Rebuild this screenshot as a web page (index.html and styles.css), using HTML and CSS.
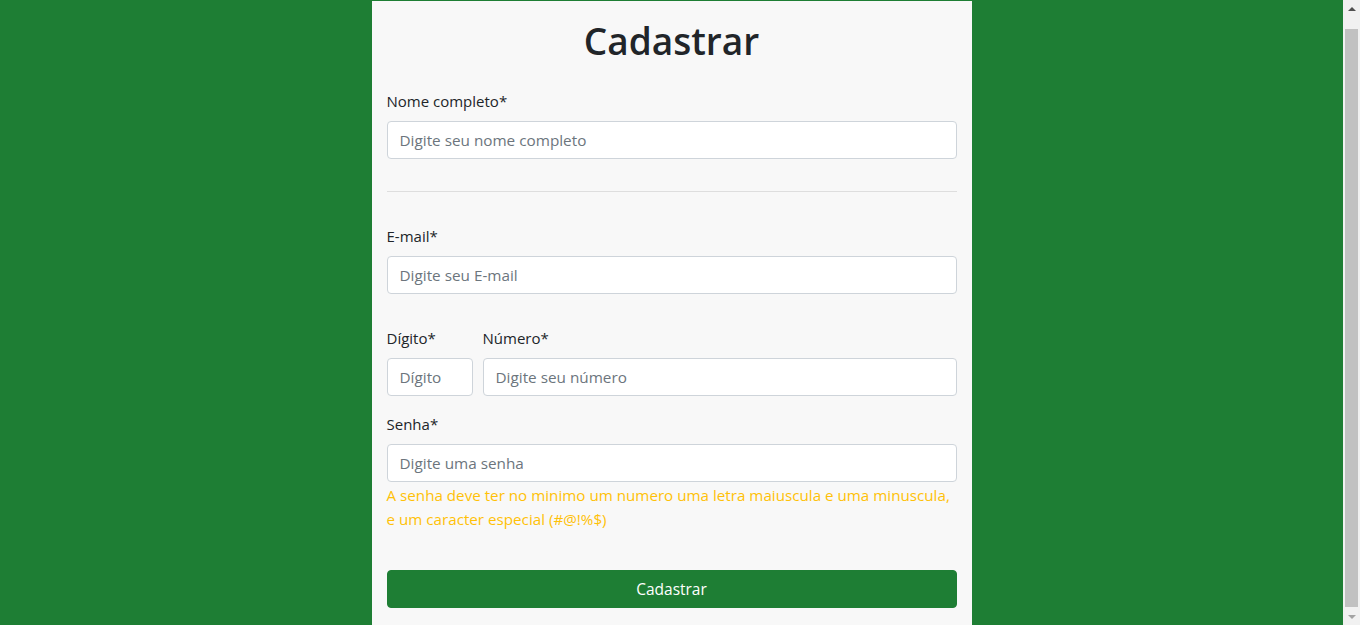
FILE: index.html
```html
<!DOCTYPE html>
<html lang="pt-BR">
<head>
<meta charset="utf-8">
<title>Cadastrar</title>
<link rel="stylesheet" href="styles.css">
</head>
<body>
<div class="page">
  <main class="card">
    <h1 class="title">Cadastrar</h1>
    <form class="form">
      <div class="group">
        <label class="label" for="nome">Nome completo*</label>
        <input class="input" id="nome" type="text" placeholder="Digite seu nome completo">
      </div>
      <hr class="divider">
      <div class="group group-email">
        <label class="label" for="email">E-mail*</label>
        <input class="input" id="email" type="email" placeholder="Digite seu E-mail">
      </div>
      <div class="row">
        <div class="col col-digit">
          <label class="label" for="digito">Dígito*</label>
          <input class="input" id="digito" type="text" placeholder="Dígito">
        </div>
        <div class="col col-num">
          <label class="label" for="numero">Número*</label>
          <input class="input" id="numero" type="text" placeholder="Digite seu número">
        </div>
      </div>
      <div class="group group-pass">
        <label class="label" for="senha">Senha*</label>
        <input class="input" id="senha" type="password" placeholder="Digite uma senha">
        <p class="hint">A senha deve ter no minimo um numero uma letra maiuscula e uma minuscula, e um caracter especial (#@!%$)</p>
      </div>
      <button class="btn" type="button">Cadastrar</button>
    </form>
  </main>
</div>
<div class="scrollbar" aria-hidden="true">
  <div class="sb-btn"><span class="arrow-up"></span></div>
  <div class="sb-track"><div class="sb-thumb"></div></div>
  <div class="sb-btn"><span class="arrow-down"></span></div>
</div>
</body>
</html>
```

FILE: styles.css
```css
* {
  box-sizing: border-box;
}
html, body {
  overflow: hidden;
}
body {
  margin: 0;
  background: #1e7e34;
  font-family: "Open Sans", "Noto Sans", sans-serif;
  font-size: 16px;
  line-height: 24px;
  color: #212529;
}
.page {
  margin-right: 17px;
}
.card {
  width: 600px;
  margin: 1px auto 0;
  background: #f8f8f8;
  padding: 16px 15px 31px;
}
.title {
  margin: 0 0 24px;
  text-align: center;
  font-size: 37px;
  line-height: 48px;
  font-weight: 600;
  color: #212529;
}
.form {
  display: flex;
  flex-direction: column;
}
.group {
  display: flex;
  flex-direction: column;
  margin-bottom: 16px;
}
.label {
  display: block;
  margin-bottom: 8px;
  font-size: 15px;
}
.input {
  display: block;
  width: 100%;
  height: 38px;
  padding: 6px 12px;
  font-family: inherit;
  font-size: 15.3px;
  line-height: 24px;
  color: #495057;
  background: #fff;
  border: 1px solid #ced4da;
  border-radius: 4px;
}
.input::placeholder {
  color: #6c757d;
  opacity: 1;
}
.divider {
  width: 100%;
  margin: 16px 0 32px;
  border: 0;
  border-top: 1px solid rgba(0, 0, 0, 0.1);
}
.group-email {
  margin-bottom: 32px;
}
.row {
  display: flex;
  gap: 10px;
  margin-bottom: 16px;
}
.col {
  display: flex;
  flex-direction: column;
}
.col-digit {
  width: 86px;
  flex: none;
}
.col-num {
  flex: 1;
}
.group-pass {
  margin-bottom: 39px;
}
.hint {
  margin: 1px 0 0;
  font-size: 15.2px;
  line-height: 24px;
  color: #ffc107;
}
.btn {
  display: block;
  width: 100%;
  height: 38px;
  padding: 6px 12px;
  font-family: inherit;
  font-size: 15.5px;
  line-height: 24px;
  color: #fff;
  background: #1e7e34;
  border: 1px solid #1e7e34;
  border-radius: 4px;
}
.scrollbar {
  position: fixed;
  top: 0;
  right: 0;
  bottom: 0;
  width: 17px;
  background: #f1f1f1;
  display: flex;
  flex-direction: column;
}
.sb-btn {
  height: 17px;
  flex: none;
  display: flex;
  align-items: center;
  justify-content: center;
}
.arrow-up {
  width: 0;
  height: 0;
  border-left: 4px solid transparent;
  border-right: 4px solid transparent;
  border-bottom: 4px solid #505050;
}
.arrow-down {
  width: 0;
  height: 0;
  border-left: 4px solid transparent;
  border-right: 4px solid transparent;
  border-top: 4px solid #a3a3a3;
}
.sb-track {
  flex: 1;
  padding: 12px 2px 1px;
  display: flex;
}
.sb-thumb {
  flex: 1;
  background: #c1c1c1;
}
```
